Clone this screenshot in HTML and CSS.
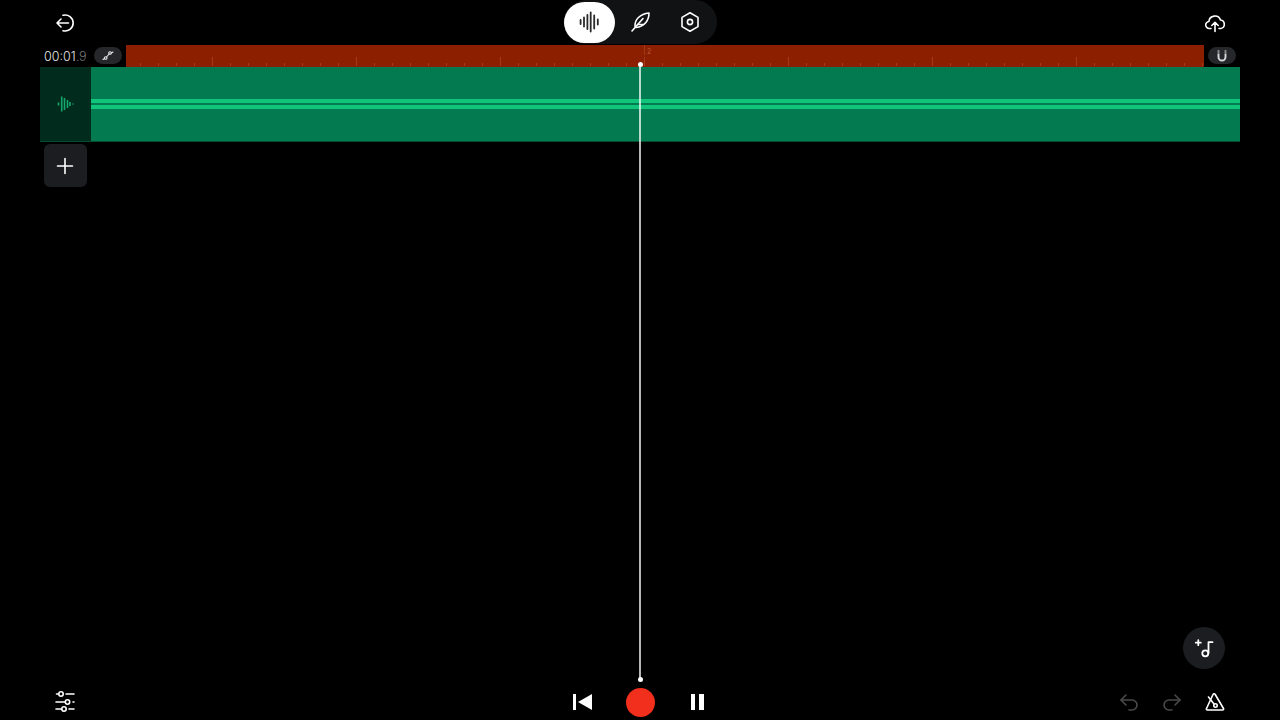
FILE: index.html
```html
<!DOCTYPE html>
<html lang="en">
<head>
  <meta charset="UTF-8">
  <title>Recording</title>
  <link rel="stylesheet" href="styles.css">
</head>
<body>

  <div class="app">

    <header class="topbar">
      <div class="topbar-left">
        <svg class="icon" width="22" height="22" viewBox="0 0 22 22">
          <path d="M9 3.300a8 8 0 1 1 0 15.400"/>
          <path d="M14.500 11H3M7 7l-4 4 4 4"/>
        </svg>
      </div>
      <nav class="modes">
        <button class="mode mode-active">
          <svg class="icon icon-wave" width="24" height="24" viewBox="0 0 24 24">
            <path d="M3.600 10v4M7 7.500v9M10.400 5v14M13.700 2.500v19M17.200 5.500v13M20.800 9.500v5"/>
          </svg>
        </button>
        <button class="mode">
          <svg class="icon" width="22" height="22" viewBox="0 0 22 22">
            <path d="M3 20 14 7.500"/>
            <path d="M6 15.500C5.500 8.500 11 3 20 2c0 7-4 13.500-13 14.500"/>
            <path d="M8.500 13.500h5.500"/>
          </svg>
        </button>
        <button class="mode">
          <svg class="icon" width="22" height="22" viewBox="0 0 22 22">
            <path d="M11 1.800 19 6.400v9.200L11 20.200 3 15.600V6.400z"/>
            <circle cx="11" cy="11" r="2.600"/>
          </svg>
        </button>
      </nav>
      <div class="topbar-right">
        <svg class="icon" width="22" height="22" viewBox="0 0 22 22">
          <path d="M7 16.500H5.500a3.500 3.500 0 0 1-.6-7A6 6 0 0 1 16.500 8a4.300 4.300 0 0 1 .3 8.500H15"/>
          <path d="M11 19.500V10.500M7.800 13.500 11 10.300l3.200 3.200"/>
        </svg>
      </div>
    </header>

    <section class="timeline">
      <div class="ruler-row">
        <div class="time">00:01<span class="time-frac">.9</span></div>
        <button class="chip">
          <svg class="icon icon-thin" width="12" height="12" viewBox="0 0 12 12">
            <circle cx="3.700" cy="8" r="1.300"/>
            <circle cx="8" cy="3" r="1.300"/>
            <path d="M4.500 7 7.200 4M2.500 8.500 1 9.500M9.300 3 11 2"/>
          </svg>
        </button>
        <div class="ruler">
          <span class="ruler-label">2</span>
        </div>
        <button class="chip">
          <svg class="icon icon-magnet" width="12" height="14" viewBox="0 0 12 14">
            <path d="M2.500 4.500v3.500a3.500 3.500 0 0 0 7 0V4.500"/>
            <path class="magnet-tips" d="M2.500 1v3.500M9.500 1v3.500"/>
          </svg>
        </button>
      </div>

      <div class="track">
        <div class="track-head">
          <svg class="track-icon" width="18" height="16" viewBox="0 0 18 16">
            <path d="M1.500 6.500v3M4.700 .5v15M7.500 2v12M10.500 4v8M13 6v4M16 7.500v1"/>
          </svg>
        </div>
        <div class="track-body">
          <div class="wave-line"></div>
          <div class="wave-line"></div>
        </div>
      </div>

      <button class="add-track">
        <svg class="icon" width="18" height="18" viewBox="0 0 18 18">
          <path d="M9 1.500v15M1.500 9h15"/>
        </svg>
      </button>
    </section>

    <div class="floating-row">
      <button class="add-sound">
        <svg class="icon icon-bold" width="22" height="22" viewBox="0 0 22 22">
          <path d="M2.800 5.700h5M5.300 3.200v5"/>
          <circle cx="12.300" cy="16.300" r="3"/>
          <path d="M15.500 16V5.200h4"/>
        </svg>
      </button>
    </div>

    <footer class="bottombar">
      <div class="bottom-left">
        <svg class="icon" width="22" height="22" viewBox="0 0 22 22">
          <path d="M2.500 3h2M12 3h8M2 11h9M19 11h1M2 18h5M15 18h5"/>
          <circle cx="7" cy="3" r="2.200"/>
          <circle cx="13.500" cy="11" r="2.200"/>
          <circle cx="10" cy="18" r="2.200"/>
        </svg>
      </div>
      <div class="transport">
        <svg class="skip" width="19" height="16" viewBox="0 0 19 16">
          <path d="M0 0h3v16H0zM19 0v16L5 8z"/>
        </svg>
        <button class="record"></button>
        <div class="pause"><span></span><span></span></div>
      </div>
      <div class="bottom-right">
        <svg class="icon icon-muted" width="20" height="20" viewBox="0 0 20 20">
          <path d="M7 3 2 8l5 5"/>
          <path d="M2 8h11a5 5 0 0 1 0 10h-3"/>
        </svg>
        <svg class="icon icon-muted" width="20" height="20" viewBox="0 0 20 20">
          <path d="m13 3 5 5-5 5"/>
          <path d="M18 8H7a5 5 0 0 0 0 10h3"/>
        </svg>
        <svg class="icon" width="20" height="20" viewBox="0 0 20 20">
          <path d="M8 2.500a1.200 1.200 0 0 1 2.200 0L18.500 16.500a1 1 0 0 1-1 1.500h-15a1 1 0 0 1-1-1.500z"/>
          <path d="M3.500 5 9 12"/>
          <circle cx="10.500" cy="13.500" r="1.700"/>
        </svg>
      </div>
    </footer>

    <div class="playhead"></div>
  </div>

</body>
</html>
```

FILE: styles.css
```css
* {
  box-sizing: border-box;
}

body {
  margin: 0;
  background: #000;
  font-family: 'Inter', 'Liberation Sans', sans-serif;
  color: #fff;
}

button {
  border: none;
  padding: 0;
  color: inherit;
  cursor: pointer;
}

.app {
  position: relative;
  width: 1280px;
  height: 720px;
  overflow: hidden;
  display: flex;
  flex-direction: column;
}

.icon {
  display: block;
  fill: none;
  stroke: #fff;
  stroke-width: 1.6;
  stroke-linecap: round;
  stroke-linejoin: round;
}

.icon-wave {
  stroke: #2a2a2a;
  stroke-width: 1.8;
}

.icon-thin {
  stroke: #e8e8e8;
  stroke-width: 1.1;
}

.icon-bold {
  stroke-width: 1.8;
}

.icon-muted {
  stroke: #4a4a4a;
}

.icon-magnet {
  stroke: #d8d8d8;
  stroke-width: 1.9;
  stroke-linecap: butt;
}

.magnet-tips {
  stroke: #8a8a8a;
}

/* top bar */
.topbar {
  height: 45px;
  display: grid;
  grid-template-columns: 1fr auto 1fr;
}

.topbar-left {
  display: flex;
  align-items: center;
  padding-left: 54px;
}

.topbar-right {
  display: flex;
  align-items: center;
  justify-content: flex-end;
  padding-right: 54px;
}

.modes {
  width: 153px;
  height: 44px;
  background: #101214;
  border-radius: 22px;
  display: flex;
  align-items: center;
}

.mode {
  width: 50px;
  height: 41px;
  border-radius: 21px;
  background: none;
  display: flex;
  align-items: center;
  justify-content: center;
}

.mode-active {
  background: #fff;
  width: 51px;
}

/* timeline */
.timeline {
  padding-left: 40px;
  width: 1240px;
}

.ruler-row {
  height: 22px;
  display: flex;
  align-items: center;
  padding-left: 4px;
}

.time {
  width: 50px;
  font-size: 12.5px;
  font-weight: 300;
  white-space: nowrap;
  color: #e8e8e8;
}

.time-frac {
  color: #777;
}

.chip {
  width: 28px;
  height: 17px;
  margin-top: -1px;
  border-radius: 9px;
  background: #25272a;
  display: flex;
  align-items: center;
  justify-content: center;
}

.ruler {
  position: relative;
  width: 1078px;
  height: 22px;
  margin: 0 4px;
  background-color: #8b1f00;
  background-image:
    repeating-linear-gradient(90deg, transparent 0 86px, #a03a18 86px 87px, transparent 87px 144px),
    repeating-linear-gradient(90deg, transparent 0 14px, #a03a18 14px 15px, transparent 15px 18px);
  background-size: 144px 9px, 18px 3px;
  background-position: 0 12px, 0 18px;
  background-repeat: repeat-x;
}

.ruler-label {
  position: absolute;
  left: 518px;
  top: 0;
  height: 10px;
  padding: 2px 0 0 2px;
  border-left: 1px solid #a03a18;
  font-size: 7px;
  color: #b9583a;
}

.track {
  height: 75px;
  display: flex;
  border-bottom: 1px solid #034d33;
}

.track-head {
  width: 51px;
  background: #012b1c;
  display: flex;
  align-items: center;
  justify-content: center;
}

.track-icon {
  fill: none;
  stroke: #14a86c;
  stroke-width: 1.6;
}

.track-body {
  flex: 1;
  background: #037a50;
  display: flex;
  flex-direction: column;
  justify-content: center;
  gap: 2px;
}

.wave-line {
  height: 4px;
  background: #10c47c;
}

.add-track {
  width: 43px;
  height: 43px;
  margin: 2px 0 0 4px;
  padding-right: 1px;
  border-radius: 6px;
  background: #1b1d20;
  display: flex;
  align-items: center;
  justify-content: center;
}

/* bottom */
.floating-row {
  flex: 1;
  display: flex;
  align-items: flex-end;
  justify-content: flex-end;
  padding: 0 55px 15px 0;
}

.add-sound {
  width: 42px;
  height: 42px;
  border-radius: 50%;
  background: #1b1d20;
  display: flex;
  align-items: center;
  justify-content: center;
}

.bottombar {
  height: 36px;
  display: grid;
  grid-template-columns: 1fr auto 1fr;
  align-items: center;
}

.bottom-left {
  padding-left: 54px;
}

.transport {
  display: grid;
  grid-template-columns: 53px 29px 53px;
  align-items: center;
}

.skip {
  display: block;
  fill: #fff;
}

.record {
  width: 29px;
  height: 29px;
  border-radius: 50%;
  background: #f12f1c;
}

.pause {
  display: flex;
  gap: 4px;
  padding-left: 36px;
}

.pause span {
  flex: none;
  width: 4.5px;
  height: 16px;
  background: #fff;
}

.bottom-right {
  display: flex;
  justify-content: flex-end;
  gap: 23px;
  padding-right: 55px;
}

/* playhead goes over the tracks */
.playhead {
  position: absolute;
  left: 639px;
  top: 64px;
  width: 2px;
  height: 616px;
  background: rgba(255, 255, 255, 0.72);
}

.playhead::before,
.playhead::after {
  content: '';
  position: absolute;
  left: -1.5px;
  width: 5px;
  height: 5px;
  border-radius: 50%;
  background: #fff;
}

.playhead::before {
  top: -2px;
}

.playhead::after {
  bottom: -2px;
}
```
